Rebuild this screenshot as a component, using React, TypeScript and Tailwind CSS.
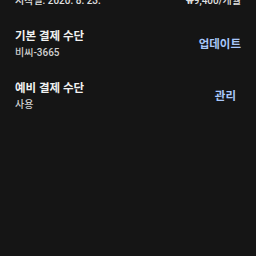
import React from 'react';

const font = { fontFamily: 'Roboto, "Noto Sans CJK KR", sans-serif' };

interface RowProps {
  title: string;
  sub: string;
  action: string;
  actionClass: string;
}

const PaymentRow: React.FC<RowProps> = ({ title, sub, action, actionClass }) => (
  <div className="flex items-center justify-between">
    <div className="flex flex-col">
      <span className="text-[11.5px] leading-[16px] font-bold text-[#f1f1f1]">{title}</span>
      <span className="text-[10px] leading-[14px] font-medium text-[#d0d0d0] mt-[2px]">{sub}</span>
    </div>
    <span className={`text-[11.5px] leading-[16px] font-bold text-[#a8c7fa] ${actionClass}`}>{action}</span>
  </div>
);

export default function App() {
  return (
    <div className="w-[256px] h-[256px] bg-[#151515] overflow-hidden" style={font}>
      <div className="px-[15px] flex flex-col gap-[20px]">
        <div className="flex items-center justify-between -mt-[6px] text-[10px] leading-[14px] font-medium text-[#e0e0e0]">
          <span>시작일: 2020. 8. 23.</span>
          <span>₩9,400/개월</span>
        </div>
        <PaymentRow title="기본 결제 수단" sub="비씨-3665" action="업데이트" actionClass="" />
        <PaymentRow title="예비 결제 수단" sub="사용" action="관리" actionClass="mr-[5px]" />
      </div>
    </div>
  );
}
